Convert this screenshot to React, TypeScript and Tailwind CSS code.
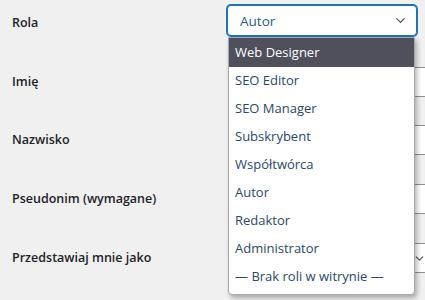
import { ChevronDown } from "lucide-react";

const roles = [
  "Web Designer",
  "SEO Editor",
  "SEO Manager",
  "Subskrybent",
  "Współtwórca",
  "Autor",
  "Redaktor",
  "Administrator",
  "— Brak roli w witrynie —",
];

const Label = ({ children }: { children: React.ReactNode }) => (
  <div className="w-[215px] shrink-0 pl-[12px] text-[12.5px] font-semibold text-[#1d2327]">
    {children}
  </div>
);

const TextInput = () => (
  <div className="ml-[14px] h-[30px] w-[400px] shrink-0 rounded-[4px] border border-[#8c8f94] bg-white" />
);

const App = () => {
  return (
    <div
      className="h-[300px] w-[425px] overflow-hidden bg-[#f0f0f1]"
      style={{ fontFamily: '"Open Sans", "Noto Sans", sans-serif' }}
    >
      <div className="flex flex-col pt-[5px]">
        {/* Rola */}
        <div className="flex h-[31px] items-center">
          <Label>
            <span className="relative top-[3px]">Rola</span>
          </Label>
          <div className="relative z-10 ml-[12px]">
            <div className="flex h-[31px] w-[190px] items-center justify-between rounded-[4px] border border-[#2271b1] bg-white pl-[12px] pr-[8px] text-[13.5px] text-[#2c5a85] shadow-[0_0_0_1px_#2271b1]">
              <span className="relative top-[1px]">Autor</span>
              <ChevronDown size={15} strokeWidth={2} className="text-[#50575e]" />
            </div>

            <div className="absolute left-[1px] top-[32px] w-[187px] rounded-b-[4px] border border-[#a7aaad] bg-white pb-[3px] shadow-[2px_3px_5px_rgba(0,0,0,0.3)]">
              {roles.map((r, i) => (
                <div
                  key={r}
                  className={
                    i === 0
                      ? "flex h-[29px] items-center bg-[#50505d] px-[6px] text-[13px] text-white"
                      : "flex h-[28px] items-center px-[6px] text-[13px] text-[#2b4866]"
                  }
                >
                  {r}
                </div>
              ))}
            </div>
          </div>
        </div>

        <div className="mt-[31px] flex h-[30px] items-center">
          <Label>Imię</Label>
          <TextInput />
        </div>

        <div className="mt-[28px] flex h-[30px] items-center">
          <Label>Nazwisko</Label>
          <TextInput />
        </div>

        <div className="mt-[29px] flex h-[30px] items-center">
          <Label>Pseudonim (wymagane)</Label>
          <TextInput />
        </div>

        <div className="mt-[29px] flex h-[30px] items-center">
          <Label>Przedstawiaj mnie jako</Label>
          <div className="ml-[14px] flex h-[30px] w-[202px] shrink-0 items-center justify-end rounded-[4px] border border-[#8c8f94] bg-white pr-[4px]">
            <ChevronDown size={13} strokeWidth={2} className="text-[#50575e]" />
          </div>
        </div>
      </div>
    </div>
  );
};

export default App;
